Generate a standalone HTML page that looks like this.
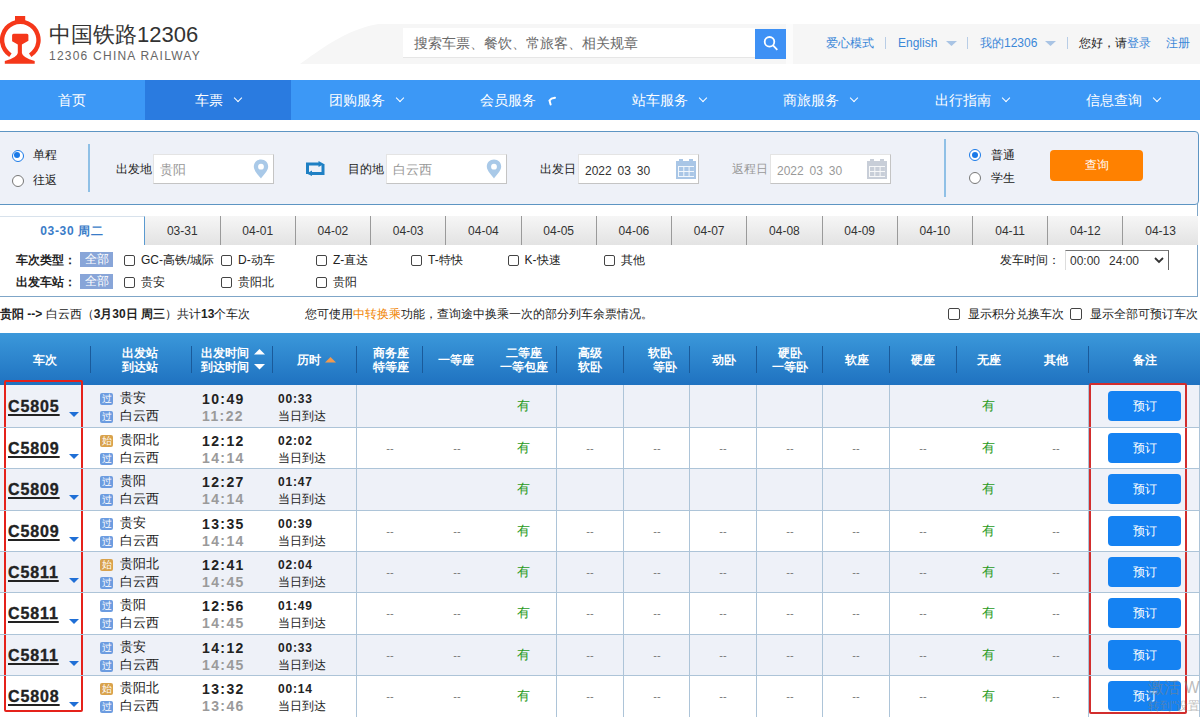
<!DOCTYPE html><html><head><meta charset="utf-8"><title>12306</title><style>
*{box-sizing:border-box;margin:0;padding:0}
html,body{width:1200px;height:717px;overflow:hidden;background:#fff;font-family:'Liberation Sans',sans-serif;color:#333}
.ab{position:absolute;white-space:nowrap}
.nav{position:absolute;top:80px;left:0;width:1200px;height:40px;background:#3c98f6}
.nt{position:absolute;top:0;height:40px;line-height:40px;color:#fff;font-size:14px;white-space:nowrap}
.chev{display:inline-block;width:6px;height:6px;border-right:1.6px solid #fff;border-bottom:1.6px solid #fff;transform:rotate(45deg);margin-left:12px;position:relative;top:-4px}
.lbl{position:absolute;font-size:12px;color:#222;white-space:nowrap;line-height:14px}
.inp{position:absolute;top:154px;height:30px;background:#fff;border:1px solid #e4e4e4;border-right-color:#c4c4c4;border-bottom-color:#c4c4c4}
.ph{position:absolute;left:6px;top:7px;font-size:13px;line-height:16px;color:#999;white-space:nowrap}
.radio{position:absolute;width:12px;height:12px;border-radius:50%;border:1px solid #777;background:#fff}
.radio.on{border:1.5px solid #1a7ae8}
.radio.on:after{content:'';position:absolute;left:1.5px;top:1.5px;width:6px;height:6px;border-radius:50%;background:#1a7ae8}
.tab{position:absolute;top:216px;height:29px;width:75px;background:linear-gradient(#f6f6f6,#e3e3e3);border-left:1px solid #9a9a9a;font-size:12px;line-height:31px;text-align:center;color:#333}
.cb{position:absolute;width:11px;height:11px;border:1px solid #444;border-radius:2px;background:#fff}
.ft{position:absolute;font-size:12px;line-height:14px;color:#222;white-space:nowrap}
.badge{position:absolute;width:33px;height:15px;background:#88a5d8;color:#fff;font-size:12px;line-height:15px;text-align:center}
.th{position:absolute;color:#fff;font-weight:bold;font-size:12px;line-height:14px;text-align:center;white-space:nowrap}
.sep{position:absolute;top:346px;width:1px;height:27px;background:#1a5a9a}
.row{position:absolute;left:0;width:1200px}
.vl{position:absolute;width:1px;background:#adc4d8}
.tn{position:absolute;left:8px;font-size:16px;font-weight:bold;color:#222;text-decoration:underline;text-decoration-thickness:2px;text-underline-offset:2px;letter-spacing:0.9px;line-height:18px;-webkit-text-stroke:0.35px #222}
.tri{position:absolute;left:68.5px;width:0;height:0;border-left:5px solid transparent;border-right:5px solid transparent;border-top:5.5px solid #1f6fd6}
.ic{position:absolute;left:100px;width:13px;height:12px;border-radius:2px;color:#fff;font-size:10px;line-height:12px;text-align:center}
.ic.g{background:#6c9ce0}
.ic.s{background:#d9a24c}
.st{position:absolute;left:120px;font-size:12.5px;line-height:14px;color:#1a1a1a;white-space:nowrap;font-weight:500}
.t1{position:absolute;left:202px;font-size:14px;font-weight:bold;letter-spacing:1.4px;line-height:16px;color:#222}
.t2{position:absolute;left:202px;font-size:14px;font-weight:bold;letter-spacing:1.4px;line-height:16px;color:#9a9a9a}
.d1{position:absolute;left:278px;font-size:12px;font-weight:bold;letter-spacing:0.8px;line-height:14px;color:#222}
.d2{position:absolute;left:278px;font-size:12px;line-height:14px;color:#222;white-space:nowrap}
.you{position:absolute;font-size:13px;line-height:14px;color:#2a9a1a;width:30px;margin-left:-15px;text-align:center}
.dash{position:absolute;font-size:11px;line-height:12px;color:#777;width:30px;margin-left:-15px;text-align:center}
.btn{position:absolute;left:1108px;width:73px;height:30px;border-radius:4px;background:#1582f2;color:#fff;font-size:12px;line-height:30px;text-align:center}
</style></head><body><svg class="ab" style="left:0;top:0" width="1200" height="80"><path d="M300 64 C320 50 345 30 378 24 L1200 24 L1200 64 Z" fill="#f6f6f6"/></svg><svg class="ab" style="left:0;top:0" width="44" height="70" viewBox="0 0 44 70">
<g fill="#f5371a">
<rect x="15" y="16" width="10.2" height="5.5"/>
<path d="M9.2 57.1 A20.4 20.4 0 1 1 31.4 57.1 L29 53.4 A16 16 0 1 0 11.6 53.4 Z"/>
<path d="M13.6 33.8 H26.9 Q28.4 33.8 28.4 35.3 V40.8 L21.9 44.4 V53 Q22.5 57.5 34.7 61 V63.7 H4.8 V61 Q17.2 57.5 17.8 53 V44.4 L12.1 41.2 V35.3 Q12.1 33.8 13.6 33.8 Z"/>
</g></svg><div class="ab" style="left:49px;top:20px;font-size:22px;line-height:30px;color:#333">中国铁路12306</div><div class="ab" style="left:49px;top:49px;font-size:12px;line-height:14px;color:#666;letter-spacing:1.23px">12306 CHINA RAILWAY</div><div class="ab" style="left:403px;top:28px;width:352px;height:30px;background:#fff;border-bottom:1px solid #e6e6e6"></div><div class="ab" style="left:414px;top:35px;font-size:14px;line-height:16px;color:#6a6a6a">搜索车票、餐饮、常旅客、相关规章</div><div class="ab" style="left:786px;top:24px;width:7px;height:40px;background:#fcfcfc"></div><div class="ab" style="left:755px;top:29px;width:31px;height:30px;background:#3e91f5"></div><svg class="ab" style="left:762px;top:35px" width="18" height="18"><circle cx="7.5" cy="6.8" r="4.8" stroke="#fff" stroke-width="1.8" fill="none"/><line x1="10.8" y1="10.2" x2="15.3" y2="14.8" stroke="#fff" stroke-width="1.8"/></svg><div class="ab" style="left:826px;top:36px;font-size:12px;line-height:14px;color:#3b87d8">爱心模式</div><div class="ab" style="left:885px;top:37px;width:1px;height:12px;background:#b8cde6"></div><div class="ab" style="left:898px;top:36px;font-size:12px;line-height:14px;color:#3b87d8">English</div><svg class="ab" style="left:946px;top:41px" width="11" height="6"><path d="M0 0 L11 0 L5.5 5 Z" fill="#a9c4e4"/></svg><div class="ab" style="left:967px;top:37px;width:1px;height:12px;background:#b8cde6"></div><div class="ab" style="left:980px;top:36px;font-size:12px;line-height:14px;color:#3b87d8">我的12306</div><svg class="ab" style="left:1045px;top:41px" width="11" height="6"><path d="M0 0 L11 0 L5.5 5 Z" fill="#a9c4e4"/></svg><div class="ab" style="left:1067px;top:37px;width:1px;height:12px;background:#b8cde6"></div><div class="ab" style="left:1079px;top:36px;font-size:12px;line-height:14px;color:#222">您好，请<span style="color:#3b87d8">登录</span></div><div class="ab" style="left:1166px;top:36px;font-size:12px;line-height:14px;color:#3b87d8">注册</div><div class="nav"></div><div class="ab" style="left:145px;top:80px;width:146px;height:40px;background:#2a7be0"></div><div class="nt" style="left:-28.0px;width:200px;text-align:center;top:80px">首页</div><div class="nt" style="left:118.0px;width:200px;text-align:center;top:80px">车票<span class="chev"></span></div><div class="nt" style="left:265.5px;width:200px;text-align:center;top:80px">团购服务<span class="chev"></span></div><svg class="ab" style="left:546px;top:95px" width="12" height="12"><path d="M9 2.8 L5.5 3.6 L3.5 5.5 L4.6 9.6" stroke="#fff" stroke-width="2" fill="none" stroke-linecap="round"/></svg><div class="nt" style="left:417.0px;width:200px;text-align:center;top:80px">会员服务<span class="chev" style="border:none"></span></div><div class="nt" style="left:569.0px;width:200px;text-align:center;top:80px">站车服务<span class="chev"></span></div><div class="nt" style="left:720.0px;width:200px;text-align:center;top:80px">商旅服务<span class="chev"></span></div><div class="nt" style="left:871.5px;width:200px;text-align:center;top:80px">出行指南<span class="chev"></span></div><div class="nt" style="left:1023.0px;width:200px;text-align:center;top:80px">信息查询<span class="chev"></span></div><div class="ab" style="left:-1px;top:131px;width:1200px;height:74px;background:#eef1f8;border:1px solid #5d95c3;border-radius:0 4px 4px 0"></div><div class="radio on" style="left:11.5px;top:149.5px"></div><div class="radio" style="left:11.5px;top:174.5px"></div><div class="lbl" style="left:33px;top:148px">单程</div><div class="lbl" style="left:33px;top:173px">往返</div><div class="ab" style="left:88px;top:144px;width:2px;height:48px;background:#8fc0e6"></div><div class="lbl" style="left:116px;top:162px">出发地</div><div class="inp" style="left:153px;width:121px"><div class="ph">贵阳</div></div><svg class="ab" style="left:253px;top:159px" width="16" height="20" viewBox="0 0 16 20"><path d="M8 0.5 C3.8 0.5 0.8 3.6 0.8 7.6 C0.8 12 6 16.5 8 19.5 C10 16.5 15.2 12 15.2 7.6 C15.2 3.6 12.2 0.5 8 0.5 Z M8 4.8 A2.9 2.9 0 1 1 8 10.6 A2.9 2.9 0 1 1 8 4.8 Z" fill="#a9c9e8" fill-rule="evenodd"/></svg><svg class="ab" style="left:306px;top:161px" width="19" height="15" viewBox="0 0 19 15"><path d="M1.5 13 V3 H14 M17 3 V12.5 H4.5" stroke="#1f80c4" stroke-width="3" fill="none"/><path d="M12.5 0 L18 3 L12.5 6Z M6 15 L0.5 12.5 L6 9.5Z" fill="#1f80c4"/></svg><div class="lbl" style="left:348px;top:162px">目的地</div><div class="inp" style="left:386px;width:121px"><div class="ph">白云西</div></div><svg class="ab" style="left:486px;top:159px" width="16" height="20" viewBox="0 0 16 20"><path d="M8 0.5 C3.8 0.5 0.8 3.6 0.8 7.6 C0.8 12 6 16.5 8 19.5 C10 16.5 15.2 12 15.2 7.6 C15.2 3.6 12.2 0.5 8 0.5 Z M8 4.8 A2.9 2.9 0 1 1 8 10.6 A2.9 2.9 0 1 1 8 4.8 Z" fill="#a9c9e8" fill-rule="evenodd"/></svg><div class="lbl" style="left:540px;top:162px">出发日</div><div class="inp" style="left:578px;width:121px"><div class="ph" style="color:#333;font-size:12px;word-spacing:2.5px;left:6px;top:8px">2022 03 30</div></div><svg class="ab" style="left:676px;top:159px" width="21" height="20" viewBox="0 0 21 20"><g fill="#a9c6e6"><rect x="0" y="2" width="20" height="18"/><rect x="3" y="0" width="4" height="3"/><rect x="13" y="0" width="4" height="3"/></g><rect x="2" y="7" width="16" height="11" fill="#fff" opacity="0.85"/><g fill="#a9c6e6"><rect x="3" y="8" width="4.3" height="4"/><rect x="8.3" y="8" width="4.3" height="4"/><rect x="13.6" y="8" width="4.3" height="4"/><rect x="3" y="13" width="4.3" height="4"/><rect x="8.3" y="13" width="4.3" height="4"/><rect x="13.6" y="13" width="4.3" height="4"/></g></svg><div class="lbl" style="left:732px;top:162px;color:#999">返程日</div><div class="inp" style="left:770px;width:121px"><div class="ph" style="color:#999;font-size:12px;word-spacing:2.5px;left:6px;top:8px">2022 03 30</div></div><svg class="ab" style="left:867px;top:159px" width="21" height="20" viewBox="0 0 21 20"><g fill="#c8ced8"><rect x="0" y="2" width="20" height="18"/><rect x="3" y="0" width="4" height="3"/><rect x="13" y="0" width="4" height="3"/></g><rect x="2" y="7" width="16" height="11" fill="#fff" opacity="0.85"/><g fill="#c8ced8"><rect x="3" y="8" width="4.3" height="4"/><rect x="8.3" y="8" width="4.3" height="4"/><rect x="13.6" y="8" width="4.3" height="4"/><rect x="3" y="13" width="4.3" height="4"/><rect x="8.3" y="13" width="4.3" height="4"/><rect x="13.6" y="13" width="4.3" height="4"/></g></svg><div class="ab" style="left:944px;top:139px;width:2px;height:58px;background:#8fc0e6"></div><div class="radio on" style="left:969px;top:149px"></div><div class="radio" style="left:969px;top:172px"></div><div class="lbl" style="left:991px;top:148px">普通</div><div class="lbl" style="left:991px;top:171px">学生</div><div class="ab" style="left:1050px;top:150px;width:93px;height:31px;background:#ff8100;border-radius:4px;color:#fff;font-size:12px;line-height:31px;text-align:center">查询</div><div class="ab" style="left:-1px;top:204px;width:1199px;height:93px;border-right:1px solid #7fa6c8;border-bottom:1px solid #7fa6c8"></div><div class="ab" style="left:0;top:216px;width:145px;height:29px;background:#fff;border-top:1px solid #d8e2ec;border-right:1.5px solid #5a9ad0;font-size:12px;line-height:29px;text-align:center;color:#3a7cc8;font-weight:bold;letter-spacing:0.7px">03-30 周二</div><div class="tab" style="left:145px;width:74.6px;border-left:none;">03-31</div><div class="tab" style="left:219.6px;width:75.24px;">04-01</div><div class="tab" style="left:294.84px;width:75.24px;">04-02</div><div class="tab" style="left:370.08px;width:75.24px;">04-03</div><div class="tab" style="left:445.31999999999994px;width:75.24px;">04-04</div><div class="tab" style="left:520.56px;width:75.24px;">04-05</div><div class="tab" style="left:595.8px;width:75.24px;">04-06</div><div class="tab" style="left:671.04px;width:75.24px;">04-07</div><div class="tab" style="left:746.28px;width:75.24px;">04-08</div><div class="tab" style="left:821.52px;width:75.24px;">04-09</div><div class="tab" style="left:896.76px;width:75.24px;">04-10</div><div class="tab" style="left:972.0px;width:75.24px;">04-11</div><div class="tab" style="left:1047.24px;width:75.24px;">04-12</div><div class="tab" style="left:1122.4799999999998px;width:75.24px;">04-13</div><div class="ft" style="left:16px;top:253px;font-weight:bold">车次类型：</div><div class="ft" style="left:16px;top:275px;font-weight:bold">出发车站：</div><div class="badge" style="left:80px;top:252px">全部</div><div class="badge" style="left:80px;top:274px">全部</div><div class="cb" style="left:124px;top:255px"></div><div class="ft" style="left:141px;top:253px">GC-高铁/城际</div><div class="cb" style="left:221px;top:255px"></div><div class="ft" style="left:238px;top:253px">D-动车</div><div class="cb" style="left:316px;top:255px"></div><div class="ft" style="left:333px;top:253px">Z-直达</div><div class="cb" style="left:411px;top:255px"></div><div class="ft" style="left:428px;top:253px">T-特快</div><div class="cb" style="left:507.5px;top:255px"></div><div class="ft" style="left:524.5px;top:253px">K-快速</div><div class="cb" style="left:604px;top:255px"></div><div class="ft" style="left:621px;top:253px">其他</div><div class="cb" style="left:124px;top:277px"></div><div class="ft" style="left:141px;top:275px">贵安</div><div class="cb" style="left:221px;top:277px"></div><div class="ft" style="left:238px;top:275px">贵阳北</div><div class="cb" style="left:316px;top:277px"></div><div class="ft" style="left:333px;top:275px">贵阳</div><div class="ft" style="left:1000px;top:253px">发车时间：</div><div class="ab" style="left:1065px;top:250px;width:104px;height:20px;border-top:1px solid #777;border-left:1px solid #ddd;border-right:1.5px solid #666;background:#fff"></div><div class="ft" style="left:1070px;top:254px;color:#333">00:00</div><div class="ft" style="left:1109px;top:254px;color:#333">24:00</div><svg class="ab" style="left:1154px;top:257px" width="10" height="7"><path d="M1 1 L5 5 L9 1" stroke="#333" stroke-width="1.8" fill="none"/></svg><div class="ft" style="left:0;top:307px;font-size:12px"><b>贵阳 --&gt;</b> 白云西（<b>3月30日 周三</b>）共计<b>13</b>个车次</div><div class="ft" style="left:305px;top:307px;font-size:12px">您可使用<span style="color:#f08300">中转换乘</span>功能，查询途中换乘一次的部分列车余票情况。</div><div class="cb" style="left:948px;top:308px;width:12px;height:12px"></div><div class="ft" style="left:968px;top:307px;font-size:12px">显示积分兑换车次</div><div class="cb" style="left:1070px;top:308px;width:12px;height:12px"></div><div class="ft" style="left:1090px;top:307px;font-size:12px">显示全部可预订车次</div><div class="ab" style="left:0;top:333px;width:1200px;height:52px;background:linear-gradient(#3b98da,#1f72c0)"></div><div class="sep" style="left:90px"></div><div class="sep" style="left:191px"></div><div class="sep" style="left:272px"></div><div class="sep" style="left:356px"></div><div class="sep" style="left:422px"></div><div class="sep" style="left:556px"></div><div class="sep" style="left:623px"></div><div class="sep" style="left:689px"></div><div class="sep" style="left:756px"></div><div class="sep" style="left:822px"></div><div class="sep" style="left:889px"></div><div class="sep" style="left:956px"></div><div class="sep" style="left:1088px"></div><div class="th" style="left:-15px;width:120px;top:353px;">车次</div><div class="th" style="left:80px;width:120px;top:346px;line-height:14px;">出发站<br>到达站</div><div class="th" style="left:201px;top:346px;text-align:left">出发时间<br>到达时间</div><svg class="ab" style="left:253.5px;top:349px" width="11" height="6"><path d="M0 5.5 L5.5 0 L11 5.5Z" fill="#fff"/></svg><svg class="ab" style="left:253.5px;top:364px" width="11" height="6"><path d="M0 0 L5.5 5.5 L11 0Z" fill="#fff"/></svg><div class="th" style="left:297px;top:353px;text-align:left">历时</div><svg class="ab" style="left:325px;top:356.5px" width="11" height="6"><path d="M0 5.5 L5.5 0 L11 5.5Z" fill="#f09a50"/></svg><div class="th" style="left:331px;width:120px;top:346px;line-height:14px;">商务座<br>特等座</div><div class="th" style="left:396px;width:120px;top:353px;">一等座</div><div class="th" style="left:464px;width:120px;top:346px;line-height:14px;">二等座<br>一等包座</div><div class="th" style="left:530px;width:120px;top:346px;line-height:14px;">高级<br>软卧</div><div class="th" style="left:600px;width:120px;top:346px;line-height:14px;">软卧<br>&nbsp;&nbsp;&nbsp;等卧</div><div class="th" style="left:664px;width:120px;top:353px;">动卧</div><div class="th" style="left:730px;width:120px;top:346px;line-height:14px;">硬卧<br>一等卧</div><div class="th" style="left:797px;width:120px;top:353px;">软座</div><div class="th" style="left:863px;width:120px;top:353px;">硬座</div><div class="th" style="left:929px;width:120px;top:353px;">无座</div><div class="th" style="left:996px;width:120px;top:353px;">其他</div><div class="th" style="left:1085px;width:120px;top:353px;">备注</div><div class="row" style="top:385px;height:42px;background:#eef1f8"></div><div class="row" style="top:427px;height:1px;background:#adc4d8;z-index:1"></div><div class="vl" style="left:356px;top:385px;height:42px"></div><div class="vl" style="left:556px;top:385px;height:42px"></div><div class="vl" style="left:623px;top:385px;height:42px"></div><div class="vl" style="left:689px;top:385px;height:42px"></div><div class="vl" style="left:756px;top:385px;height:42px"></div><div class="vl" style="left:822px;top:385px;height:42px"></div><div class="vl" style="left:889px;top:385px;height:42px"></div><div class="vl" style="left:1088px;top:385px;height:42px"></div><div class="vl" style="left:1199px;top:385px;height:42px"></div><div class="tn" style="top:398px">C5805</div><div class="tri" style="top:412px"></div><div class="ic g" style="top:393px">过</div><div class="ic g" style="top:411px">过</div><div class="st" style="top:391px">贵安</div><div class="st" style="top:409px">白云西</div><div class="t1" style="top:391px">10:49</div><div class="t2" style="top:408px">11:22</div><div class="d1" style="top:392px">00:33</div><div class="d2" style="top:409px">当日到达</div><div class="you" style="left:523px;top:399px">有</div><div class="you" style="left:988px;top:399px">有</div><div class="btn" style="top:391px">预订</div><div class="row" style="top:427px;height:41px;background:#ffffff"></div><div class="row" style="top:468px;height:1px;background:#adc4d8;z-index:1"></div><div class="vl" style="left:356px;top:427px;height:41px"></div><div class="vl" style="left:556px;top:427px;height:41px"></div><div class="vl" style="left:623px;top:427px;height:41px"></div><div class="vl" style="left:689px;top:427px;height:41px"></div><div class="vl" style="left:756px;top:427px;height:41px"></div><div class="vl" style="left:822px;top:427px;height:41px"></div><div class="vl" style="left:889px;top:427px;height:41px"></div><div class="vl" style="left:1088px;top:427px;height:41px"></div><div class="vl" style="left:1199px;top:427px;height:41px"></div><div class="tn" style="top:440px">C5809</div><div class="tri" style="top:454px"></div><div class="ic s" style="top:435px">始</div><div class="ic g" style="top:453px">过</div><div class="st" style="top:433px">贵阳北</div><div class="st" style="top:451px">白云西</div><div class="t1" style="top:433px">12:12</div><div class="t2" style="top:450px">14:14</div><div class="d1" style="top:434px">02:02</div><div class="d2" style="top:451px">当日到达</div><div class="you" style="left:523px;top:441px">有</div><div class="you" style="left:988px;top:441px">有</div><div class="dash" style="left:390px;top:442px">--</div><div class="dash" style="left:457px;top:442px">--</div><div class="dash" style="left:590px;top:442px">--</div><div class="dash" style="left:657px;top:442px">--</div><div class="dash" style="left:723px;top:442px">--</div><div class="dash" style="left:790px;top:442px">--</div><div class="dash" style="left:856px;top:442px">--</div><div class="dash" style="left:923px;top:442px">--</div><div class="dash" style="left:1056px;top:442px">--</div><div class="btn" style="top:433px">预订</div><div class="row" style="top:468px;height:42px;background:#eef1f8"></div><div class="row" style="top:510px;height:1px;background:#adc4d8;z-index:1"></div><div class="vl" style="left:356px;top:468px;height:42px"></div><div class="vl" style="left:556px;top:468px;height:42px"></div><div class="vl" style="left:623px;top:468px;height:42px"></div><div class="vl" style="left:689px;top:468px;height:42px"></div><div class="vl" style="left:756px;top:468px;height:42px"></div><div class="vl" style="left:822px;top:468px;height:42px"></div><div class="vl" style="left:889px;top:468px;height:42px"></div><div class="vl" style="left:1088px;top:468px;height:42px"></div><div class="vl" style="left:1199px;top:468px;height:42px"></div><div class="tn" style="top:481px">C5809</div><div class="tri" style="top:495px"></div><div class="ic g" style="top:476px">过</div><div class="ic g" style="top:494px">过</div><div class="st" style="top:474px">贵阳</div><div class="st" style="top:492px">白云西</div><div class="t1" style="top:474px">12:27</div><div class="t2" style="top:491px">14:14</div><div class="d1" style="top:475px">01:47</div><div class="d2" style="top:492px">当日到达</div><div class="you" style="left:523px;top:482px">有</div><div class="you" style="left:988px;top:482px">有</div><div class="btn" style="top:474px">预订</div><div class="row" style="top:510px;height:41px;background:#ffffff"></div><div class="row" style="top:551px;height:1px;background:#adc4d8;z-index:1"></div><div class="vl" style="left:356px;top:510px;height:41px"></div><div class="vl" style="left:556px;top:510px;height:41px"></div><div class="vl" style="left:623px;top:510px;height:41px"></div><div class="vl" style="left:689px;top:510px;height:41px"></div><div class="vl" style="left:756px;top:510px;height:41px"></div><div class="vl" style="left:822px;top:510px;height:41px"></div><div class="vl" style="left:889px;top:510px;height:41px"></div><div class="vl" style="left:1088px;top:510px;height:41px"></div><div class="vl" style="left:1199px;top:510px;height:41px"></div><div class="tn" style="top:523px">C5809</div><div class="tri" style="top:537px"></div><div class="ic g" style="top:518px">过</div><div class="ic g" style="top:536px">过</div><div class="st" style="top:516px">贵安</div><div class="st" style="top:534px">白云西</div><div class="t1" style="top:516px">13:35</div><div class="t2" style="top:533px">14:14</div><div class="d1" style="top:517px">00:39</div><div class="d2" style="top:534px">当日到达</div><div class="you" style="left:523px;top:524px">有</div><div class="you" style="left:988px;top:524px">有</div><div class="dash" style="left:390px;top:525px">--</div><div class="dash" style="left:457px;top:525px">--</div><div class="dash" style="left:590px;top:525px">--</div><div class="dash" style="left:657px;top:525px">--</div><div class="dash" style="left:723px;top:525px">--</div><div class="dash" style="left:790px;top:525px">--</div><div class="dash" style="left:856px;top:525px">--</div><div class="dash" style="left:923px;top:525px">--</div><div class="dash" style="left:1056px;top:525px">--</div><div class="btn" style="top:516px">预订</div><div class="row" style="top:551px;height:41px;background:#eef1f8"></div><div class="row" style="top:592px;height:1px;background:#adc4d8;z-index:1"></div><div class="vl" style="left:356px;top:551px;height:41px"></div><div class="vl" style="left:556px;top:551px;height:41px"></div><div class="vl" style="left:623px;top:551px;height:41px"></div><div class="vl" style="left:689px;top:551px;height:41px"></div><div class="vl" style="left:756px;top:551px;height:41px"></div><div class="vl" style="left:822px;top:551px;height:41px"></div><div class="vl" style="left:889px;top:551px;height:41px"></div><div class="vl" style="left:1088px;top:551px;height:41px"></div><div class="vl" style="left:1199px;top:551px;height:41px"></div><div class="tn" style="top:564px">C5811</div><div class="tri" style="top:578px"></div><div class="ic s" style="top:559px">始</div><div class="ic g" style="top:577px">过</div><div class="st" style="top:557px">贵阳北</div><div class="st" style="top:575px">白云西</div><div class="t1" style="top:557px">12:41</div><div class="t2" style="top:574px">14:45</div><div class="d1" style="top:558px">02:04</div><div class="d2" style="top:575px">当日到达</div><div class="you" style="left:523px;top:565px">有</div><div class="you" style="left:988px;top:565px">有</div><div class="dash" style="left:390px;top:566px">--</div><div class="dash" style="left:457px;top:566px">--</div><div class="dash" style="left:590px;top:566px">--</div><div class="dash" style="left:657px;top:566px">--</div><div class="dash" style="left:723px;top:566px">--</div><div class="dash" style="left:790px;top:566px">--</div><div class="dash" style="left:856px;top:566px">--</div><div class="dash" style="left:923px;top:566px">--</div><div class="dash" style="left:1056px;top:566px">--</div><div class="btn" style="top:557px">预订</div><div class="row" style="top:592px;height:42px;background:#ffffff"></div><div class="row" style="top:634px;height:1px;background:#adc4d8;z-index:1"></div><div class="vl" style="left:356px;top:592px;height:42px"></div><div class="vl" style="left:556px;top:592px;height:42px"></div><div class="vl" style="left:623px;top:592px;height:42px"></div><div class="vl" style="left:689px;top:592px;height:42px"></div><div class="vl" style="left:756px;top:592px;height:42px"></div><div class="vl" style="left:822px;top:592px;height:42px"></div><div class="vl" style="left:889px;top:592px;height:42px"></div><div class="vl" style="left:1088px;top:592px;height:42px"></div><div class="vl" style="left:1199px;top:592px;height:42px"></div><div class="tn" style="top:605px">C5811</div><div class="tri" style="top:619px"></div><div class="ic g" style="top:600px">过</div><div class="ic g" style="top:618px">过</div><div class="st" style="top:598px">贵阳</div><div class="st" style="top:616px">白云西</div><div class="t1" style="top:598px">12:56</div><div class="t2" style="top:615px">14:45</div><div class="d1" style="top:599px">01:49</div><div class="d2" style="top:616px">当日到达</div><div class="you" style="left:523px;top:606px">有</div><div class="you" style="left:988px;top:606px">有</div><div class="dash" style="left:390px;top:607px">--</div><div class="dash" style="left:457px;top:607px">--</div><div class="dash" style="left:590px;top:607px">--</div><div class="dash" style="left:657px;top:607px">--</div><div class="dash" style="left:723px;top:607px">--</div><div class="dash" style="left:790px;top:607px">--</div><div class="dash" style="left:856px;top:607px">--</div><div class="dash" style="left:923px;top:607px">--</div><div class="dash" style="left:1056px;top:607px">--</div><div class="btn" style="top:598px">预订</div><div class="row" style="top:634px;height:41px;background:#eef1f8"></div><div class="row" style="top:675px;height:1px;background:#adc4d8;z-index:1"></div><div class="vl" style="left:356px;top:634px;height:41px"></div><div class="vl" style="left:556px;top:634px;height:41px"></div><div class="vl" style="left:623px;top:634px;height:41px"></div><div class="vl" style="left:689px;top:634px;height:41px"></div><div class="vl" style="left:756px;top:634px;height:41px"></div><div class="vl" style="left:822px;top:634px;height:41px"></div><div class="vl" style="left:889px;top:634px;height:41px"></div><div class="vl" style="left:1088px;top:634px;height:41px"></div><div class="vl" style="left:1199px;top:634px;height:41px"></div><div class="tn" style="top:647px">C5811</div><div class="tri" style="top:661px"></div><div class="ic g" style="top:642px">过</div><div class="ic g" style="top:660px">过</div><div class="st" style="top:640px">贵安</div><div class="st" style="top:658px">白云西</div><div class="t1" style="top:640px">14:12</div><div class="t2" style="top:657px">14:45</div><div class="d1" style="top:641px">00:33</div><div class="d2" style="top:658px">当日到达</div><div class="you" style="left:523px;top:648px">有</div><div class="you" style="left:988px;top:648px">有</div><div class="dash" style="left:390px;top:649px">--</div><div class="dash" style="left:457px;top:649px">--</div><div class="dash" style="left:590px;top:649px">--</div><div class="dash" style="left:657px;top:649px">--</div><div class="dash" style="left:723px;top:649px">--</div><div class="dash" style="left:790px;top:649px">--</div><div class="dash" style="left:856px;top:649px">--</div><div class="dash" style="left:923px;top:649px">--</div><div class="dash" style="left:1056px;top:649px">--</div><div class="btn" style="top:640px">预订</div><div class="row" style="top:675px;height:42px;background:#ffffff"></div><div class="vl" style="left:356px;top:675px;height:42px"></div><div class="vl" style="left:556px;top:675px;height:42px"></div><div class="vl" style="left:623px;top:675px;height:42px"></div><div class="vl" style="left:689px;top:675px;height:42px"></div><div class="vl" style="left:756px;top:675px;height:42px"></div><div class="vl" style="left:822px;top:675px;height:42px"></div><div class="vl" style="left:889px;top:675px;height:42px"></div><div class="vl" style="left:1088px;top:675px;height:42px"></div><div class="vl" style="left:1199px;top:675px;height:42px"></div><div class="tn" style="top:688px">C5808</div><div class="tri" style="top:702px"></div><div class="ic s" style="top:683px">始</div><div class="ic g" style="top:701px">过</div><div class="st" style="top:681px">贵阳北</div><div class="st" style="top:699px">白云西</div><div class="t1" style="top:681px">13:32</div><div class="t2" style="top:698px">13:46</div><div class="d1" style="top:682px">00:14</div><div class="d2" style="top:699px">当日到达</div><div class="you" style="left:523px;top:689px">有</div><div class="you" style="left:988px;top:689px">有</div><div class="dash" style="left:390px;top:690px">--</div><div class="dash" style="left:457px;top:690px">--</div><div class="dash" style="left:590px;top:690px">--</div><div class="dash" style="left:657px;top:690px">--</div><div class="dash" style="left:723px;top:690px">--</div><div class="dash" style="left:790px;top:690px">--</div><div class="dash" style="left:856px;top:690px">--</div><div class="dash" style="left:923px;top:690px">--</div><div class="dash" style="left:1056px;top:690px">--</div><div class="btn" style="top:681px">预订</div><div class="ab" style="left:4px;top:380px;width:79px;height:332px;border:2.5px solid #e5221b;border-radius:2px"></div><div class="ab" style="left:1089px;top:382.5px;width:98px;height:331px;border:2.5px solid #d22d2d;border-radius:2px"></div><div class="ab" style="left:1148px;top:679px;font-size:16px;line-height:18px;color:rgba(130,130,130,0.55)">激活 Windows</div><div class="ab" style="left:1148px;top:699px;font-size:12px;line-height:14px;color:rgba(130,130,130,0.55)">转到"设置"以激活 Windows。</div></body></html>
